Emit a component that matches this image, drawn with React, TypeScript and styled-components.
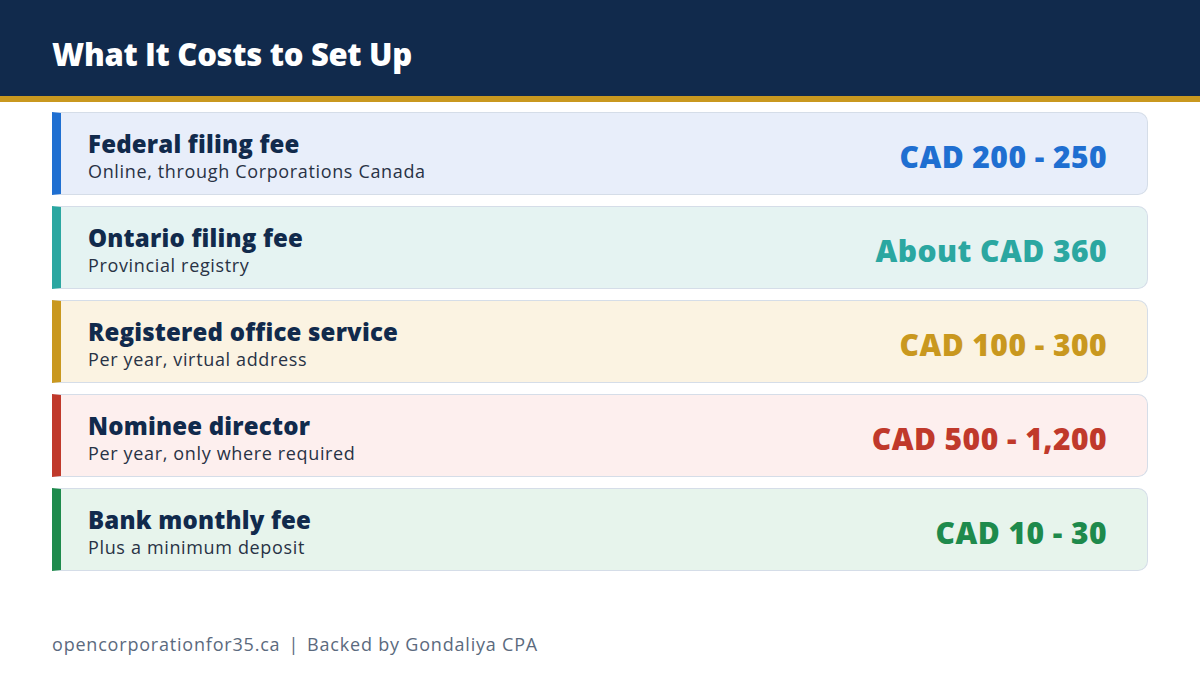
import React from "react";
import styled, { createGlobalStyle } from "styled-components";

const Global = createGlobalStyle`
  html, body { margin: 0; padding: 0; background: #ffffff; }
  body { font-family: "Open Sans", "Noto Sans", sans-serif; }
  #root { width: 1200px; height: 675px; }
`;

const Page = styled.div`
  width: 1200px;
  height: 675px;
  display: flex;
  flex-direction: column;
  background: #ffffff;
  overflow: hidden;
`;

const Header = styled.header`
  height: 96px;
  background: #112a4c;
  border-bottom: 6px solid #c9981f;
  display: flex;
  align-items: center;
  padding: 0 52px;
  box-sizing: content-box;
`;

const Title = styled.h1`
  margin: 0;
  color: #ffffff;
  font-size: 31px;
  font-weight: 800;
  letter-spacing: -0.3px;
  padding-top: 11px;
`;

const List = styled.main`
  display: flex;
  flex-direction: column;
  gap: 11px;
  padding: 10px 52px 0 52px;
`;

const Row = styled.div<{ $accent: string; $bg: string }>`
  height: 83px;
  box-sizing: border-box;
  display: flex;
  align-items: center;
  justify-content: space-between;
  background: ${(p) => p.$bg};
  border: 1px solid #d5dde8;
  border-left: 9px solid ${(p) => p.$accent};
  border-radius: 0 10px 10px 0;
  padding: 0 40px 0 27px;
`;

const TextBlock = styled.div`
  display: flex;
  flex-direction: column;
  padding-top: 5px;
`;

const Label = styled.div`
  color: #112a4c;
  font-size: 24px;
  font-weight: 800;
  line-height: 30px;
  letter-spacing: 0.2px;
`;

const Sub = styled.div`
  color: #283245;
  font-size: 18px;
  font-weight: 400;
  line-height: 24px;
  letter-spacing: 0.65px;
`;

const Amount = styled.div<{ $color: string }>`
  color: ${(p) => p.$color};
  font-size: 30px;
  font-weight: 800;
  letter-spacing: 0.45px;
  padding-top: 6px;
`;

const Footer = styled.footer`
  margin-top: auto;
  padding: 0 52px 19px 52px;
  color: #5b6a7e;
  font-size: 18px;
  font-weight: 500;
  height: 24px;
  line-height: 24px;
  letter-spacing: 0.8px;
`;

const Sep = styled.span`
  margin: 0 8px;
  color: #5b6a7e;
`;

const items = [
  { label: "Federal filing fee", sub: "Online, through Corporations Canada", amount: "CAD 200 - 250", accent: "#1f6fd1", bg: "#e8eefa" },
  { label: "Ontario filing fee", sub: "Provincial registry", amount: "About CAD 360", accent: "#2ba7a1", bg: "#e5f3f2" },
  { label: "Registered office service", sub: "Per year, virtual address", amount: "CAD 100 - 300", accent: "#c9981f", bg: "#fbf3e2" },
  { label: "Nominee director", sub: "Per year, only where required", amount: "CAD 500 - 1,200", accent: "#c0392b", bg: "#fdefee" },
  { label: "Bank monthly fee", sub: "Plus a minimum deposit", amount: "CAD 10 - 30", accent: "#1e8a4c", bg: "#e7f4ec" },
];

export default function App() {
  return (
    <Page>
      <Global />
      <Header>
        <Title>What It Costs to Set Up</Title>
      </Header>
      <List>
        {items.map((it) => (
          <Row key={it.label} $accent={it.accent} $bg={it.bg}>
            <TextBlock>
              <Label>{it.label}</Label>
              <Sub>{it.sub}</Sub>
            </TextBlock>
            <Amount $color={it.accent}>{it.amount}</Amount>
          </Row>
        ))}
      </List>
      <Footer>
        opencorporationfor35.ca<Sep>|</Sep>Backed by Gondaliya CPA
      </Footer>
    </Page>
  );
}
